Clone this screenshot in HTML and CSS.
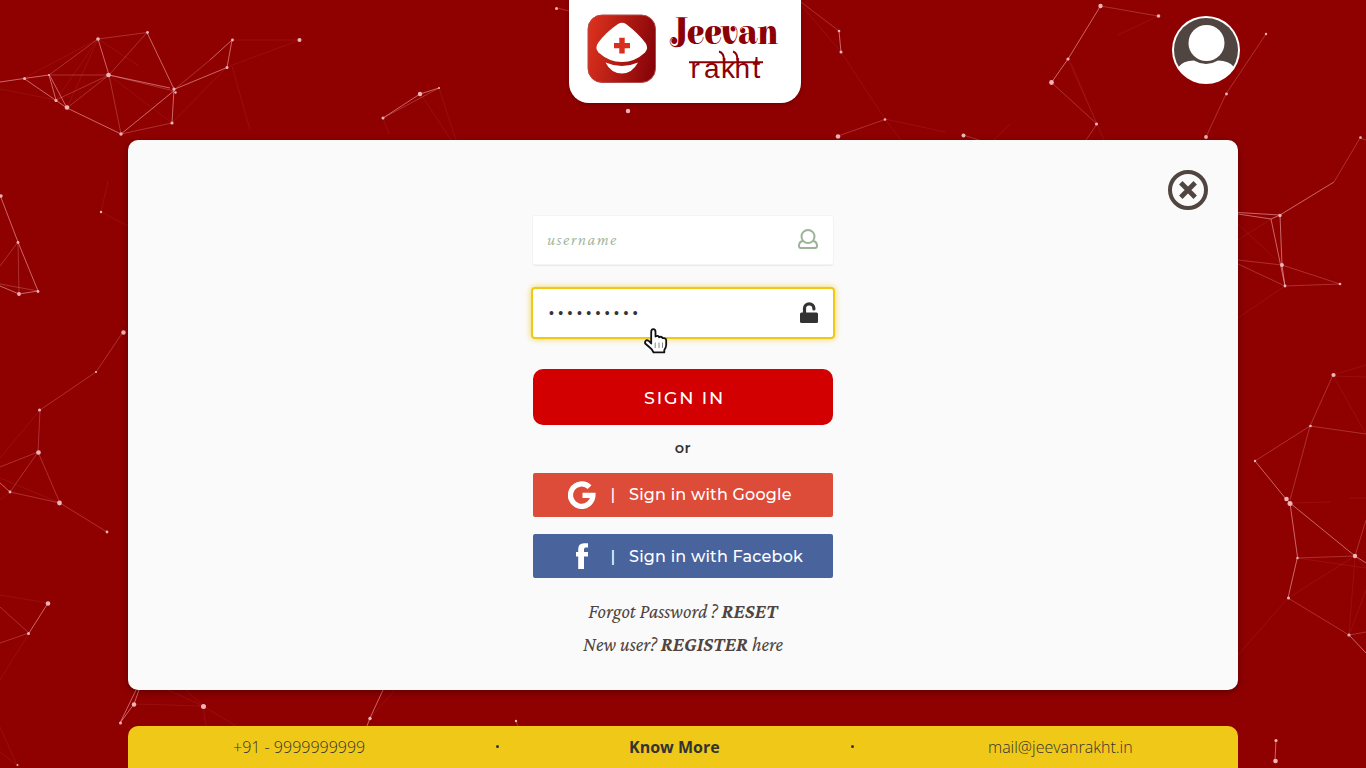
FILE: index.html
```html
<!DOCTYPE html>
<html lang="en">
<head>
<meta charset="utf-8">
<title>Jeevan rakht</title>
<link rel="stylesheet" href="styles.css">
</head>
<body>
<svg class="network" viewBox="0 0 1366 768" aria-hidden="true">
  <g class="strong">
    <path d="M0 82L24 78.500L49 75M24 78.500L67 108L121 134L175 90M49 75L56 100M50 76L67 108M147 32.500L174 89L172 123M109 75L170 88M227 67.500L175 89M210 60L232 40L227 67.500M98 39L109 75M383 118L420 94L439 88M1100.500 6L1068 59L1051.500 82.500M839 31L841 52M1238 212.500L1280 215L1334 182M1238 214L1271 219L1280 215M1271 219L1285 286L1282 265L1280 215M1255 461L1286 499L1290 503L1297.500 557L1288 598M1290 503L1355 556L1366 563M1349 635L1366 653M136 690L120 723L134 704L139 690M383 690L370 718L367 726M29 633L48 603M0 195L18 242L38 291L19 294L0 286M0 483L10 492M1276 740L1275 760"/>
  </g>
  <g class="medium">
    <path d="M49 75L98 39L147 32.500M67 108L109 75L147 32.500M49 75L109 75L121 134L172 123M56 100L109 75M109 75L174 91M175 89L210 60M383 118L439 88M1051.500 82.500L1097 124L1086 140M1100.500 6L1158 16M1206 137L1226 94L1266 34M801 2L839 31M838 136L885 119.500M963 135L979 140M1334 182L1360 138L1366 140M1282 265L1340 284L1285 286M1238 260L1282 265M1238 264L1285 286M1333 375L1310 426L1255 461M1310 426L1366 434M1310 426L1290 500M1297 558L1355 556M1288 598L1349 635L1366 632M1355 556L1366 520M123 332L96 372L40 410L38 452L60 503L107 532M38 452L10 492L60 503M0 467L38 452M18 242L0 266M18 242L19 294M38 291L0 284M0 607L29 633L0 643M557 8L569 11M516 721L518 726"/>
  </g>
  <g class="faint">
    <path d="M24 78L98 39L56 100M98 39L67 108M98 39L139 66M109 75L172 123L227 67L300 40L232 40M0 89L56 100M175 89L145 115M232 66L250 130M383 118L389 134M422 96L451 140M439 88L456 140M801 5L841 52L885 119L901 140M885 119L945 132M1068 59L1097 124L1071 63M1097 124L1104 140M1158 16L1118 35M994 140L1010 124M1238 240L1271 219M1238 224L1282 265M1285 286L1238 318M1238 655L1288 598L1355 556L1349 635M1297 558L1366 568L1355 556M1333 375L1358 420L1366 434M1333 375L1366 365M1333 376L1366 377M1366 590L1349 635M40 410L0 458M0 595L48 603M29 633L0 680M0 727L17 765L0 752M168 690L203 706L236 726M203 706L134 704M203 706L186 690M203 706L206 726M395 690L370 718M101 212L128 226M101 212L108 181M0 500L10 492M0 478L60 503M1290 503L1330 502M1350 498L1366 498"/>
  </g>
  <g class="dots">
    <circle cx="24.500" cy="78.500" r="1.500"/><circle cx="49" cy="75" r="1"/><circle cx="98" cy="39" r="1.800"/><circle cx="147.500" cy="32.500" r="1.400"/><circle cx="108.500" cy="75" r="2.300"/><circle cx="56" cy="100.500" r="1.600"/><circle cx="67" cy="107.500" r="2.300"/><circle cx="121" cy="134" r="1.700"/><circle cx="172" cy="123" r="1.600"/><circle cx="174" cy="89" r="1.600"/><circle cx="175.500" cy="92.500" r="1.200"/><circle cx="227" cy="67.500" r="1.500"/><circle cx="232.500" cy="40" r="1.400"/><circle cx="299.500" cy="40" r="2"/>
    <circle cx="383" cy="118" r="1.500"/><circle cx="420" cy="94" r="2.200"/><circle cx="439" cy="88" r="1"/><circle cx="556.500" cy="8.500" r="1.500"/><circle cx="628" cy="111" r="2.200"/><circle cx="839" cy="31" r="1.300"/><circle cx="841" cy="52" r="1.500"/><circle cx="885" cy="119.500" r="1.300"/><circle cx="838" cy="136.500" r="2.300"/><circle cx="963.500" cy="135.500" r="2"/><circle cx="1100.500" cy="6" r="2.200"/><circle cx="1158.500" cy="16" r="1.800"/><circle cx="1068" cy="59" r="1.600"/><circle cx="1051.500" cy="82.500" r="2.400"/><circle cx="1096.500" cy="124" r="1.600"/><circle cx="1266" cy="34" r="1.200"/><circle cx="1226.500" cy="94" r="1.400"/><circle cx="1206" cy="137" r="1.900"/>
    <circle cx="1360.500" cy="137.500" r="1.300"/><circle cx="1280" cy="215.500" r="1.700"/><circle cx="1282" cy="265" r="1.900"/><circle cx="1285" cy="286" r="1.400"/><circle cx="1340" cy="284" r="1.300"/><circle cx="1333.500" cy="375" r="2.100"/><circle cx="1310.500" cy="426" r="1.300"/><circle cx="1255" cy="461" r="1.200"/><circle cx="1286.500" cy="499" r="2.300"/><circle cx="1290" cy="503.500" r="2.500"/><circle cx="1297.500" cy="558" r="1.200"/><circle cx="1355" cy="556" r="2.200"/><circle cx="1288.500" cy="598" r="1.500"/><circle cx="1349" cy="635" r="1.600"/><circle cx="1276" cy="740.500" r="1.600"/><circle cx="1275.500" cy="761" r="2.300"/>
    <circle cx="1" cy="196" r="1.700"/><circle cx="18" cy="242.500" r="1.400"/><circle cx="38" cy="291.500" r="1.400"/><circle cx="19" cy="294" r="1.900"/><circle cx="101" cy="212" r="1.200"/><circle cx="123.500" cy="332.500" r="2.200"/><circle cx="96" cy="372" r="1.100"/><circle cx="39.500" cy="410" r="1.500"/><circle cx="38.500" cy="452.500" r="2.300"/><circle cx="10" cy="492" r="1.400"/><circle cx="59.500" cy="503" r="2.400"/><circle cx="107" cy="532" r="1.400"/><circle cx="48" cy="603.500" r="2.300"/><circle cx="28.500" cy="633.500" r="1.500"/><circle cx="134" cy="704.500" r="2.200"/><circle cx="120.500" cy="723" r="1.500"/><circle cx="203.500" cy="706.500" r="2.500"/><circle cx="370" cy="718.500" r="1.700"/><circle cx="17.500" cy="765" r="1"/><circle cx="516" cy="721" r="1.200"/>
  </g>
</svg>

<div class="page">
  <header class="header">
    <a class="brand" href="#">
      <svg width="232" height="103" viewBox="0 0 232 103" role="img" aria-label="Jeevan rakht">
        <defs><linearGradient id="brand-red" x1="0" y1="0.4" x2="1" y2="0.6"><stop offset="0" stop-color="#d9301d"/><stop offset="1" stop-color="#870409"/></linearGradient></defs>
        <rect x="19" y="15" width="67.500" height="67.500" rx="14" fill="url(#brand-red)" stroke="#b5494a"/>
        <path d="M49 24Q53 21.500 57 24Q69 33 76.500 43Q80 48 76 52.500Q66 62 53 62Q40 62 29.500 52.500Q25.500 48 29 43Q37 32 49 24Z" fill="#fff"/>
        <path d="M50.300 37.700h5.400v5.200h5.300v5.300h-5.300v5.200h-5.400v-5.200H45v-5.300h5.300z" fill="#d9301d"/>
        <path d="M36.500 62.500Q53 69.500 69 62.500Q63 73.500 53 73.500Q42 73.500 36.500 62.500Z" fill="#fff"/>
        <text class="brand-name" x="103" y="44" textLength="106" lengthAdjust="spacingAndGlyphs">Jeevan</text>
        <text class="brand-sub" x="121.500 135 152 165.500 183.500" y="78">rakht</text>
        <path d="M120 62.300H194M150 51.500Q155 53 155 60M164 51.500Q168.500 53 168.500 60M187.500 57V63" fill="none" stroke="#8b0005" stroke-width="2"/>
      </svg>
    </a>
    <a class="avatar" href="#" aria-label="Profile">
      <svg width="68" height="68" viewBox="0 0 68 68">
        <defs><clipPath id="avatar-disc"><circle cx="34" cy="34" r="33"/></clipPath></defs>
        <circle cx="34" cy="34" r="34" fill="#fff"/>
        <circle cx="34" cy="34" r="32" fill="#504540"/>
        <g clip-path="url(#avatar-disc)" fill="#fff"><path d="M6 51.500Q11 44.500 22 44.500Q34 51.500 46 44.500Q57 44.500 62 51V68H6Z"/><circle cx="34.500" cy="27" r="18"/></g>
      </svg>
    </a>
  </header>

  <main class="card">
    <button class="close" aria-label="Close">
      <svg width="40" height="40" viewBox="0 0 40 40" fill="none" stroke="#504540"><circle cx="20" cy="20" r="18" stroke-width="4"/><path d="M12.800 12.800l14.400 14.400M27.200 12.800L12.800 27.200" stroke-width="4.800"/></svg>
    </button>
    <form class="form">
      <div class="field">
        <span class="placeholder">username</span>
        <svg width="20" height="20" viewBox="0 0 20 20" fill="none" stroke="#9cb399" stroke-width="2"><circle cx="10" cy="7.500" r="6.500"/><path d="M5 12Q1 12.500 1 17Q1 19 3 19H17Q19 19 19 17Q19 12.500 15 12"/></svg>
      </div>
      <div class="field focused">
        <span class="password">••••••••••</span>
        <svg class="lock" width="18" height="21" viewBox="0 0 18 21"><rect y="10.500" width="18" height="10.500" rx="1.500" fill="#333"/><path d="M4.500 12V6.500a4.700 4.700 0 0 1 9.400 0V7" fill="none" stroke="#333" stroke-width="3.200" stroke-linecap="round"/></svg>
        <svg class="pointer" width="24" height="26" viewBox="0 0 24 26"><path d="M7.200 15.500V4Q7.200 1.200 9.300 1.200Q11.500 1.200 11.500 4V8.500Q14 7 15.200 9.200Q17.500 8 18.800 10.200Q22 9.500 22.200 12.500V17Q22 20 20.300 22V24.400H9.500Q8.500 21.500 5.800 19.500L1.200 15.500Q.5 13.400 2.400 12.200Q4.500 11.800 7.200 15.500Z" fill="#fff" stroke="#111" stroke-width="1.800" stroke-linejoin="round"/><path d="M11.200 14.500V20M15 14.500V20M18.500 14.500V20" stroke="#888"/></svg>
      </div>
      <button class="signin" type="button">SIGN IN</button>
      <div class="or">or</div>
      <button class="social google" type="button">
        <svg class="social-icon" width="28" height="28" viewBox="0 0 28 28" fill="none" stroke="#fff" stroke-width="5.300"><path d="M21.600 6.200A11.200 11.200 0 1 0 24.900 14.300H14.500"/></svg>
        <span class="bar">|</span><span class="label">Sign in with Google</span>
      </button>
      <button class="social facebook" type="button">
        <svg class="social-icon" width="28" height="28" viewBox="0 0 28 28"><path d="M10.200 27V14.500H8V10H10.200V7.500Q10.200 1.200 16 1.200H20V5.500H17.500Q16 5.500 16 7.500V10H20V14.500H16V27Z" fill="#fff"/></svg>
        <span class="bar">|</span><span class="label">Sign in with Facebok</span>
      </button>
      <p class="hint forgot">Forgot Password ? <b>RESET</b></p>
      <p class="hint register">New user? <b>REGISTER</b> here</p>
    </form>
  </main>

  <footer class="footer">
    <span class="phone">+91 - 9999999999</span><i></i><b>Know More</b><i></i><span class="mail">mail@jeevanrakht.in</span>
  </footer>
</div>
</body>
</html>
```
FILE: styles.css
```css
* { box-sizing: border-box; }
body { margin: 0; background: #8f0000; overflow: hidden; }
button { border: 0; padding: 0; background: none; }
svg { display: block; }
.network { position: absolute; left: 0; top: 0; width: 1366px; height: 768px; fill: none; stroke: #f3a9ae; }
.strong { stroke-opacity: .6; stroke-width: 1; }
.medium { stroke-opacity: .32; stroke-width: .9; }
.faint { stroke-opacity: .1; stroke-width: .9; }
.dots { fill: #f0b4b8; stroke: none; }
.page { position: relative; width: 1366px; height: 768px; display: flex; flex-direction: column; }
.header { height: 140px; display: flex; justify-content: space-between; align-items: flex-start; padding: 0 126px 0 569px; }
.brand { display: block; width: 232px; height: 103px; background: #fff; border-radius: 0 0 20px 20px; box-shadow: 0 1px 4px rgba(0,0,0,.25); }
.brand-name { font: 900 36px "Elsie Swash Caps", "Playfair Display", "DejaVu Serif", serif; fill: #8b0005; }
.brand-sub { font: 28px "Liberation Sans", sans-serif; fill: #8b0005; }
.avatar { margin-top: 16px; }
.card { width: 1110px; height: 550px; margin-left: 128px; background: #fafafa; border-radius: 10px; box-shadow: 0 2px 7px rgba(0,0,0,.35); display: grid; grid-template-columns: 405px 300px 1fr; }
.close { grid-column: 3; grid-row: 1; justify-self: end; align-self: start; margin: 30px 30px 0 0; }
.form { grid-column: 2; grid-row: 1; display: flex; flex-direction: column; padding-top: 76px; }
.field { position: relative; height: 48px; display: flex; align-items: center; justify-content: space-between; padding: 0 15px 2px 14px; background: #fff; border-radius: 2px; box-shadow: 0 0 0 1px #f3f3f3, 0 2px 1px #eaeaea; }
.placeholder { font: italic 300 17px "Crimson Pro", "Crimson Text", "Liberation Serif", serif; letter-spacing: 1.4px; color: #9cb399; }
.focused { margin-top: 25px; padding-bottom: 0; box-shadow: 0 0 0 2px #f0c818, 0 0 6px 2px rgba(240,200,24,.75); }
.password { padding-left: 2px; font: 14px "Liberation Sans", sans-serif; letter-spacing: 4.4px; color: #333; }
.lock { margin-bottom: 2px; }
.pointer { position: absolute; left: 111px; top: 39px; }
.signin { height: 56px; margin-top: 32px; padding: 0 0 0 3px; background: #d20000; color: #fff; border-radius: 10px; font: 500 17.5px Montserrat, Inter, sans-serif; letter-spacing: 1.8px; }
.or { height: 48px; text-align: center; font: 600 14.500px/46px Montserrat, Inter, sans-serif; letter-spacing: .5px; color: #333; }
.social { height: 44px; display: flex; align-items: center; padding-left: 35px; border-radius: 2px; color: #fff; font: 500 16px Montserrat, Inter, sans-serif; letter-spacing: .2px; }
.google { background: #dd4b39; padding-bottom: 1px; }
.facebook { background: #49639d; margin-top: 17px; }
.social-icon { width: 28px; }
.bar { width: 33px; padding-left: 13px; margin-left: -6px; margin-right: 6px; font-weight: 500; }
.label { white-space: nowrap; }
.hint { margin: 0; height: 33px; text-align: center; white-space: nowrap; font: italic 19.8px/33px "Crimson Pro", "Crimson Text", "Liberation Serif", serif; color: #504540; }
.forgot { margin-top: 17px; }
.footer { width: 1110px; height: 42px; margin: 36px 0 0 128px; display: flex; align-items: center; background: #f0c818; border-radius: 10px 10px 0 0; color: #333; font: 300 16px "Open Sans", sans-serif; padding-left: 105px; }
.footer i { width: 3px; height: 3px; margin: 0 0 1px 1px; border-radius: 50%; background: #333; }
.footer b { width: 91px; margin: 0 130px 0 130px; white-space: nowrap; font-weight: 700; }
.phone { width: 262px; }
.mail { margin-left: 134px; }
```
